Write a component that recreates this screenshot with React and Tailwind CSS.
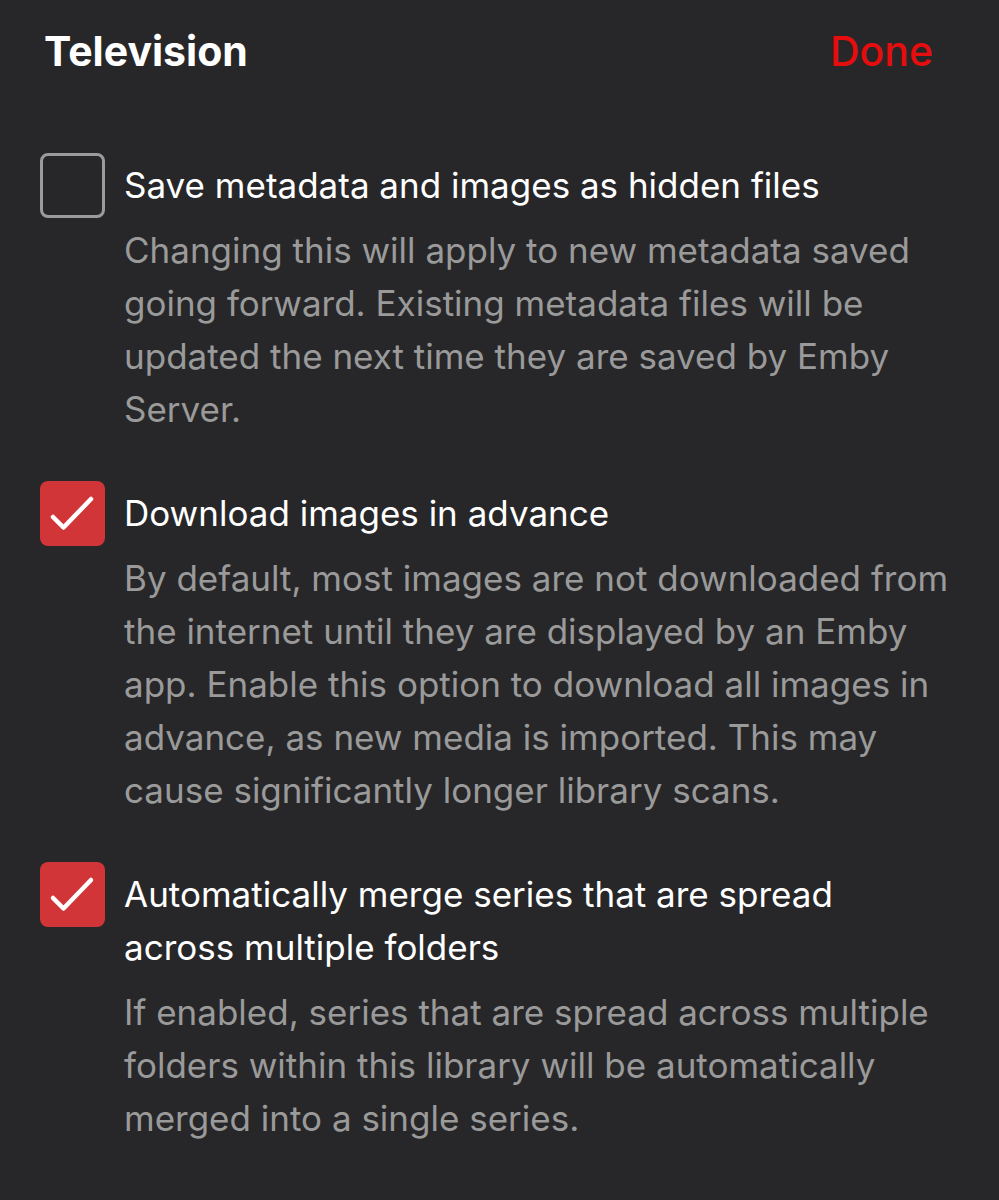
const items = [
  {
    checked: false,
    label: "Save metadata and images as hidden files",
    desc: "Changing this will apply to new metadata saved going forward. Existing metadata files will be updated the next time they are saved by Emby Server.",
  },
  {
    checked: true,
    label: "Download images in advance",
    desc: "By default, most images are not downloaded from the internet until they are displayed by an Emby app. Enable this option to download all images in advance, as new media is imported. This may cause significantly longer library scans.",
  },
  {
    checked: true,
    label: "Automatically merge series that are spread across multiple folders",
    desc: "If enabled, series that are spread across multiple folders within this library will be automatically merged into a single series.",
  },
]

function Checkbox({ checked }) {
  if (!checked) {
    return <div className="w-[65px] h-[65px] shrink-0 rounded-[8px] border-[3px] border-[#9b9b9b]" />
  }
  return (
    <div className="w-[65px] h-[65px] shrink-0 rounded-[8px] bg-[#d13538]">
      <svg width="65" height="65" viewBox="0 0 65 65" fill="none" stroke="white" strokeWidth="4.5" strokeLinecap="round" strokeLinejoin="round">
        <path d="M13 36l10.5 10.5L51 18" />
      </svg>
    </div>
  )
}

export default function App() {
  return (
    <div className="w-[999px] h-[1200px] bg-[#272729] font-['Inter',sans-serif] overflow-hidden">
      {/* Header */}
      <div className="flex items-center justify-between pl-[44px] pr-[66px] pt-[26px]">
        <h1 className="text-white font-bold text-[41px] leading-[50px]">Television</h1>
        <button className="text-[#e50d0d] font-medium text-[41px] leading-[50px]">Done</button>
      </div>

      {/* Options */}
      <div className="pl-[40px] pr-[44px] pt-[77px] flex flex-col gap-[45px]">
        {items.map(item => (
          <div key={item.label} className="flex gap-[19px]">
            <Checkbox checked={item.checked} />
            <div className="flex-1 pt-[6px]">
              <div className="text-white text-[35px] leading-[53px] pr-[24px]">{item.label}</div>
              <p className="text-[#9a9a9a] text-[35px] leading-[53px] mt-[12px]">{item.desc}</p>
            </div>
          </div>
        ))}
      </div>
    </div>
  )
}
